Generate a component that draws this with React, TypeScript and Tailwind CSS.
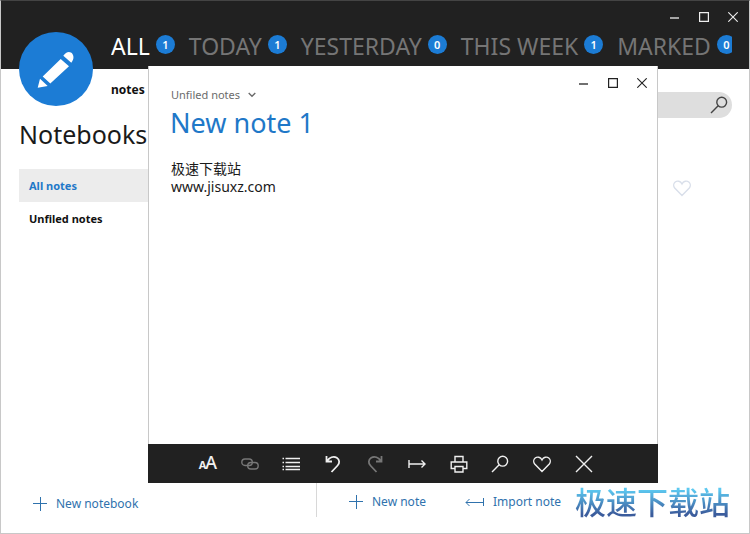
import React, { useState } from 'react';

const tabs = [
    { label: 'ALL', count: 1 },
    { label: 'TODAY', count: 1 },
    { label: 'YESTERDAY', count: 0 },
    { label: 'THIS WEEK', count: 1 },
    { label: 'MARKED', count: 0 },
];

const notebooks = ['All notes', 'Unfiled notes'];

interface IconProps {
    className?: string;
    children: React.ReactNode;
}

const Icon: React.FC<IconProps> = ({ className = '', children }) => (
    <svg
        width="18"
        height="18"
        viewBox="0 0 18 18"
        fill="none"
        stroke="currentColor"
        strokeWidth="1.4"
        className={className}
        aria-hidden="true"
    >
        {children}
    </svg>
);

const SearchIcon = () => (
    <Icon>
        <circle cx="11.7" cy="6.2" r="4.9" />
        <path d="M8.2 9.7 1 17" />
    </Icon>
);

const HeartIcon = () => (
    <Icon>
        <path d="M9 16.500 1.700 9C.2 7 .5 4.300 2.200 3 4.300 1.400 7.500 2 9 5c1.500-3 4.700-3.600 6.800-2 1.700 1.300 2 4 .5 6Z" />
    </Icon>
);

const PlusIcon = () => (
    <svg width="14" height="14" viewBox="0 0 14 14" stroke="currentColor" aria-hidden="true">
        <path d="M7.5 0v14M0 6.5h14" />
    </svg>
);

const WindowControls = () => (
    <div className="flex">
        <button aria-label="Minimize" className="flex w-[29px] h-5 items-center justify-center">
            <svg width="10" height="10" viewBox="0 0 10 10" stroke="currentColor" strokeWidth="1.3">
                <path d="M0 6h9" />
            </svg>
        </button>
        <button aria-label="Maximize" className="flex w-[29px] h-5 items-center justify-center">
            <svg width="10" height="10" viewBox="0 0 10 10" fill="none" stroke="currentColor" strokeWidth="1.2">
                <path d="M.6.6h8.8v8.8H.6z" />
            </svg>
        </button>
        <button aria-label="Close" className="flex w-[29px] h-5 items-center justify-center">
            <svg width="10" height="10" viewBox="0 0 10 10" stroke="currentColor" strokeWidth="1.1">
                <path d="m.3.3 9.4 9.4M9.7.3.3 9.7" />
            </svg>
        </button>
    </div>
);

const tools = [
    {
        label: 'Font size',
        icon: (
            <span className="flex items-baseline">
                <span className="text-[11px] leading-5 font-bold">A</span>
                <span className="-ml-px text-lg leading-5 font-medium">A</span>
            </span>
        ),
    },
    {
        label: 'Link',
        disabled: true,
        icon: (
            <Icon>
                <rect x=".8" y="4" width="10.500" height="6.500" rx="3.200" />
                <rect x="6.700" y="7.500" width="10.500" height="6.500" rx="3.200" />
            </Icon>
        ),
    },
    {
        label: 'List',
        icon: (
            <Icon>
                <path d="M3.500 3.500H18M3.500 7.500H18M3.500 11.500H18M3.500 14.500H18M.5 3.500H2M.5 7.500H2M.5 11.500H2M.5 14.500H2" />
            </Icon>
        ),
    },
    {
        label: 'Undo',
        icon: (
            <Icon>
                <path
                    d="M2.500 1v5.500H8M2.800 6.300C5.500 2.500 9.500.8 12.800 2.800c3 2 3 5.400.8 7.700L7.500 17"
                    strokeWidth="1.8"
                />
            </Icon>
        ),
    },
    {
        label: 'Redo',
        disabled: true,
        icon: (
            <Icon>
                <path
                    d="M15.500 1v5.500H10M15.200 6.300C12.500 2.500 8.500.8 5.200 2.800c-3 2-3 5.400-.8 7.700l6.100 6.500"
                    strokeWidth="1.8"
                />
            </Icon>
        ),
    },
    {
        label: 'Indent',
        icon: (
            <Icon>
                <path d="M1 5v8M1 9h16M13.500 5.500 17 9l-3.500 3.500" />
            </Icon>
        ),
    },
    {
        label: 'Print',
        icon: (
            <Icon>
                <path d="M5 7V1.500h8V7M5 13.500H1.200V7h15.600v6.500H13M5 11.500h8V17H5z" />
            </Icon>
        ),
    },
    { label: 'Find', icon: <SearchIcon /> },
    { label: 'Mark', icon: <HeartIcon /> },
    {
        label: 'Discard',
        icon: (
            <Icon>
                <path d="m1 1 16 16M17 1 1 17" />
            </Icon>
        ),
    },
];

const NoteWindow = () => (
    <section className="absolute left-[147px] right-[91px] top-[65px] bottom-[50px] flex flex-col bg-white">
        <div className="flex flex-1 flex-col border-x border-[#c8c8c8] pl-[21px]">
            <div className="flex h-10 items-start justify-between pt-[7px]">
                <label className="relative mt-3 flex items-center pl-px text-[#6b6b6b]">
                    <select
                        aria-label="Notebook"
                        className="h-5 w-[85px] appearance-none bg-transparent text-[11px] outline-none"
                    >
                        <option>Unfiled notes</option>
                    </select>
                    <svg
                        width="8"
                        height="6"
                        viewBox="0 0 8 6"
                        fill="none"
                        stroke="currentColor"
                        strokeWidth="1.4"
                        className="pointer-events-none absolute right-0"
                    >
                        <path d="m.7 1 3.3 3.3L7.3 1" />
                    </svg>
                </label>
                <div className="pr-px text-[#222]">
                    <WindowControls />
                </div>
            </div>
            <input
                aria-label="Title"
                defaultValue="New note 1"
                className="h-[34px] w-full text-[27px] text-[#1f78c8] outline-none"
            />
            <textarea
                aria-label="Note"
                defaultValue={'极速下载站\nwww.jisuxz.com'}
                className="mt-5 w-full flex-1 resize-none pl-px text-sm leading-[18px] text-[#1a1a1a] outline-none"
            />
        </div>
        <div className="grid h-[39px] shrink-0 grid-cols-10 items-center bg-[#212121] pl-[39px] pr-[53px]">
            {tools.map(tool => (
                <button
                    key={tool.label}
                    aria-label={tool.label}
                    disabled={tool.disabled}
                    className="flex justify-center text-[#f0f0f0] disabled:text-[#777]"
                >
                    {tool.icon}
                </button>
            ))}
        </div>
    </section>
);

export default function App() {
    const [tab, setTab] = useState('ALL');
    const [notebook, setNotebook] = useState('All notes');

    return (
        <div className="relative flex min-h-screen flex-col border border-t-[#444] border-[#c8c8c8] bg-white font-['Noto_Sans','Noto_Sans_CJK_SC',sans-serif]">
            <header className="relative h-[68px] bg-[#212121]">
                <div className="flex justify-end pt-[6px] pr-[2px] text-[#eee]">
                    <WindowControls />
                </div>
                <nav className="ml-[110px] mr-[17px] flex gap-[14px] overflow-hidden">
                    {tabs.map(({ label, count }) => (
                        <button
                            key={label}
                            onClick={() => setTab(label)}
                            className={`flex shrink-0 gap-[6px] text-[23px] leading-[38px] whitespace-nowrap ${tab === label ? 'text-white' : 'text-[#757575]'}`}
                        >
                            {label}
                            <span className="mt-2 flex size-[19px] items-center justify-center rounded-full bg-[#1c7cd5] text-[11px] font-semibold text-white">
                                {count}
                            </span>
                        </button>
                    ))}
                </nav>
                <svg
                    width="74"
                    height="74"
                    viewBox="0 0 74 74"
                    className="absolute left-[18px] top-[31px]"
                    aria-hidden="true"
                >
                    <circle cx="37" cy="37" r="37" fill="#1c7cd5" />
                    <path
                        d="M23.700 44.500 41.700 27 50 34.300 31.300 51.500ZM21 46.700 28.700 54 18.700 55.700ZM44.300 23.800C46.500 20.500 49.500 19 52 20.500 55 22.500 55.500 27 52.300 30.800Z"
                        fill="#fff"
                    />
                </svg>
            </header>

            <main className="flex flex-1">
                <aside className="mb-4 flex w-[316px] flex-col border-r border-[#d8d8d8] pl-[18px]">
                    <h1 className="mt-[47px] text-[25px] leading-9 text-[#1a1a1a]">Notebooks</h1>
                    <ul className="mt-[17px] mr-4 text-[11px] font-bold">
                        {notebooks.map(name => (
                            <li key={name}>
                                <button
                                    onClick={() => setNotebook(name)}
                                    className={`h-[33px] w-full px-[10px] pt-px text-left ${notebook === name ? 'bg-[#ececec] text-[#1f78c8]' : 'text-[#111]'}`}
                                >
                                    {name}
                                </button>
                            </li>
                        ))}
                    </ul>
                    <button className="mt-auto mb-[3px] flex h-5 items-center gap-[9px] pl-[14px] text-xs text-[#2f72ad]">
                        <PlusIcon />
                        New notebook
                    </button>
                </aside>

                <section className="flex flex-1 flex-col pr-[17px]">
                    <div className="mt-[23px] ml-4 flex h-[26px] items-center rounded-full bg-[#dedede] pr-1 text-[#444]">
                        <input aria-label="Search notes" className="min-w-0 flex-1 bg-transparent px-3 text-xs outline-none" />
                        <button aria-label="Search">
                            <SearchIcon />
                        </button>
                    </div>
                    <div className="mt-[61px] flex justify-end pr-[41px]">
                        <button aria-label="Mark note" className="text-[#d9dfea]">
                            <HeartIcon />
                        </button>
                    </div>
                    <footer className="mt-auto mb-[11px] flex h-10 items-center pl-8 text-xs text-[#2f72ad]">
                        <button className="flex items-center gap-[9px]">
                            <PlusIcon />
                            New note
                        </button>
                        <button className="ml-[39px] flex items-center gap-2">
                            <svg width="20" height="10" viewBox="0 0 20 10" fill="none" stroke="currentColor" aria-hidden="true">
                                <path d="M18.5 1v8M18.5 5.5H1M4.5 2 1 5.5 4.5 9" />
                            </svg>
                            Import note
                        </button>
                        <span className="mr-[2px] ml-auto bg-linear-to-b from-[#5cc8f0] from-20% to-[#3b5c9c] to-80% bg-clip-text text-[31px] leading-10 font-medium whitespace-nowrap text-transparent">
                            极速下载站
                        </span>
                    </footer>
                </section>
            </main>

            <div className="absolute left-[110px] top-[81px] text-xs leading-4 font-bold text-[#111]">notes</div>
            <NoteWindow />
        </div>
    );
}
